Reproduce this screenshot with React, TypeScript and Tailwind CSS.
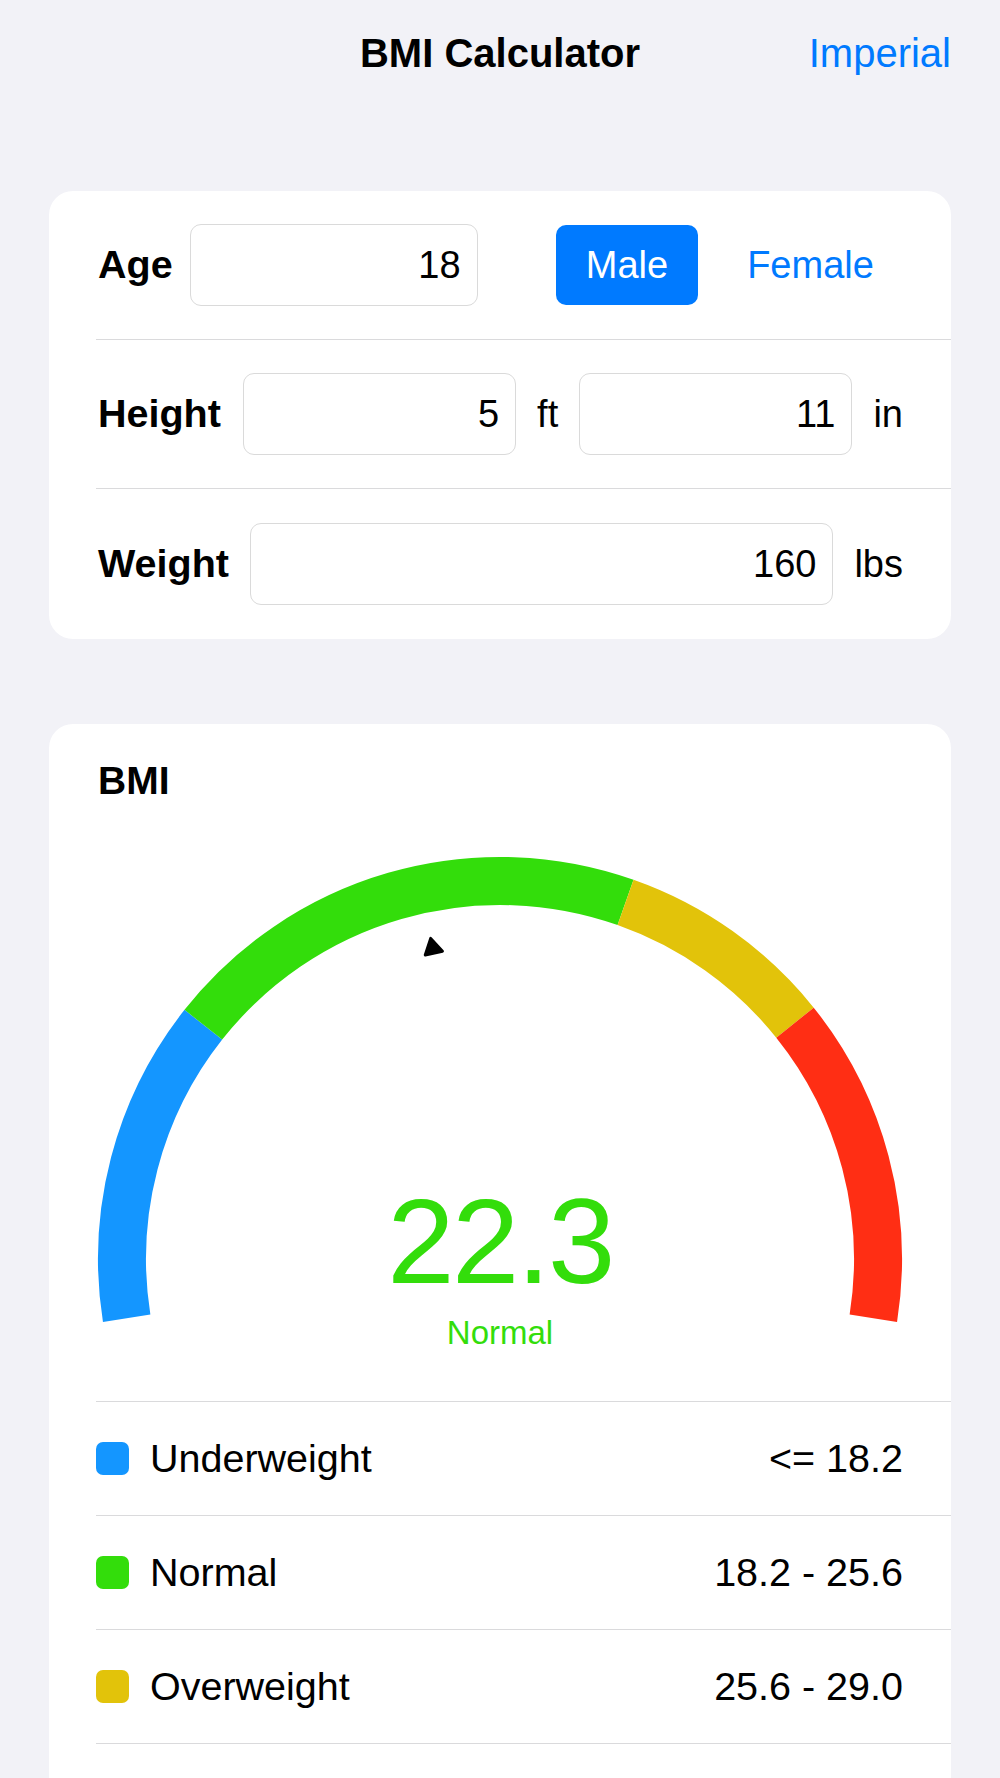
import React from 'react';

const CX = 451;
const CY = 455;
const R = 378;
const SW = 48;

function pt(deg: number, r: number) {
  const a = (deg * Math.PI) / 180;
  return [CX + r * Math.cos(a), CY - r * Math.sin(a)];
}

function arc(from: number, to: number) {
  const [x1, y1] = pt(from, R);
  const [x2, y2] = pt(to, R);
  const large = from - to > 180 ? 1 : 0;
  return `M ${x1} ${y1} A ${R} ${R} 0 ${large} 1 ${x2} ${y2}`;
}

const segments = [
  { from: 189, to: 141.7, color: '#1496FF' },
  { from: 141.7, to: 70.6, color: '#33DD0B' },
  { from: 70.6, to: 38.7, color: '#E2C30A' },
  { from: 38.7, to: -9, color: '#FF2E14' },
];

function Pointer({ angle }: { angle: number }) {
  const a = (angle * Math.PI) / 180;
  const [tx, ty] = pt(angle, 328);
  const [bx, by] = pt(angle, 313);
  // perpendicular
  const px = Math.sin(a);
  const py = Math.cos(a);
  const w = 8.8;
  const points = `${tx},${ty} ${bx + px * w},${by + py * w} ${bx - px * w},${by - py * w}`;
  return <polygon points={points} fill="#000" stroke="#000" strokeWidth={3} strokeLinejoin="round" />;
}

function Gauge() {
  return (
    <svg className="absolute inset-0" width="902" height="597" viewBox="0 0 902 597">
      {segments.map((s) => (
        <path key={s.color} d={arc(s.from, s.to)} stroke={s.color} strokeWidth={SW} fill="none" />
      ))}
      <Pointer angle={102.2} />
    </svg>
  );
}

function Field({ value, className = '' }: { value: string; className?: string }) {
  return (
    <div
      className={`flex h-[82px] items-center justify-end rounded-[11px] border border-[#DADADA] bg-white pr-[16px] text-[38px] text-black ${className}`}
    >
      {value}
    </div>
  );
}

const legend = [
  { label: 'Underweight', range: '<= 18.2', color: 'bg-[#1496FF]' },
  { label: 'Normal', range: '18.2 - 25.6', color: 'bg-[#33DD0B]' },
  { label: 'Overweight', range: '25.6 - 29.0', color: 'bg-[#E2C30A]' },
];

export default function App() {
  return (
    <div className="h-[1778px] overflow-hidden bg-[#F2F2F7] font-['Liberation_Sans',Arial,sans-serif] text-black">
      {/* Nav bar */}
      <div className="grid h-[106px] grid-cols-[1fr_auto_1fr] items-center">
        <div />
        <div className="text-[40px] font-bold">BMI Calculator</div>
        <div className="justify-self-end pr-[49px] text-[40px] text-[#007AFF]">Imperial</div>
      </div>

      {/* Inputs card */}
      <div className="mx-[49px] mt-[85px] rounded-[24px] bg-white">
        <div className="flex h-[149px] items-center border-b border-[#DADADC] ml-[47px] pl-[2px] pr-[48px]">
          <span className="text-[39.5px] font-bold">Age</span>
          <Field value="18" className="ml-[17px] w-[288px]" />
          <div className="ml-auto flex items-center gap-[20px]">
            <div className="flex h-[80px] w-[142px] items-center justify-center rounded-[10px] bg-[#007AFF] text-[38px] text-white">
              Male
            </div>
            <div className="flex h-[80px] w-[185px] items-center justify-center text-[38px] text-[#007AFF]">
              Female
            </div>
          </div>
        </div>
        <div className="flex h-[149px] items-center gap-[21px] border-b border-[#DADADC] ml-[47px] pl-[2px] pr-[48px]">
          <span className="mr-px text-[39.5px] font-bold">Height</span>
          <Field value="5" className="flex-1" />
          <span className="text-[38px]">ft</span>
          <Field value="11" className="flex-1" />
          <span className="text-[38px]">in</span>
        </div>
        <div className="flex h-[150px] items-center gap-[21px] ml-[47px] pl-[2px] pr-[48px]">
          <span className="text-[39.5px] font-bold">Weight</span>
          <Field value="160" className="flex-1" />
          <span className="text-[38px]">lbs</span>
        </div>
      </div>

      {/* Result card */}
      <div className="mx-[49px] mt-[85px] rounded-[24px] bg-white pt-[34px]">
        <div className="pl-[49px] text-[39px] leading-[46px] font-bold">BMI</div>
        <div className="relative h-[597px]">
          <Gauge />
          <div className="relative flex h-full flex-col items-center justify-end pb-[48px] text-[#33DD0B]">
            <div className="text-[121px] leading-none tracking-[-2.5px]">22.3</div>
            <div className="mt-[11px] text-[33px] leading-[40px]">Normal</div>
          </div>
        </div>
        <div className="ml-[47px]">
          {legend.map((l) => (
            <div key={l.label} className="flex h-[114px] items-center border-t border-[#DADADC] pr-[48px]">
              <div className={`h-[33px] w-[33px] rounded-[7px] ${l.color}`} />
              <span className="ml-[21px] text-[39.5px]">{l.label}</span>
              <span className="ml-auto text-[39.5px]">{l.range}</span>
            </div>
          ))}
          <div className="h-[60px] border-t border-[#DADADC]" />
        </div>
      </div>
    </div>
  );
}
